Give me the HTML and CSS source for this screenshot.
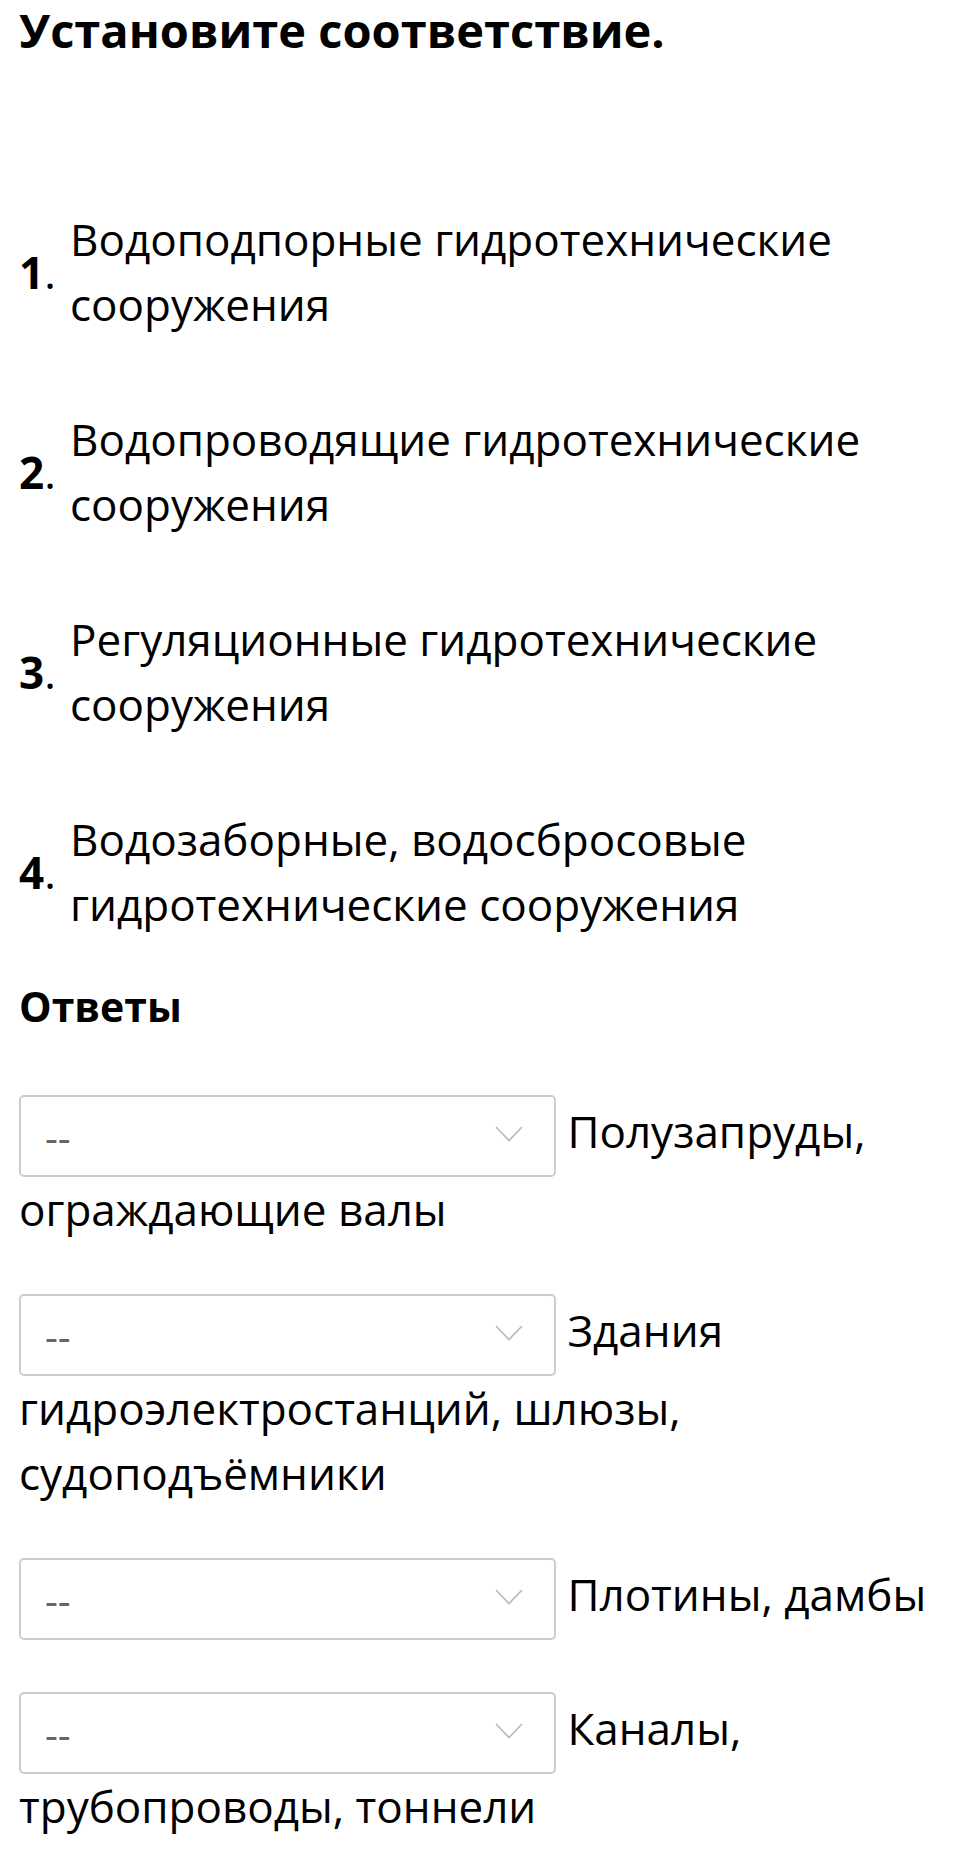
FILE: index.html
```html
<!DOCTYPE html>
<html lang="ru">
<head>
<meta charset="utf-8">
<title>Установите соответствие.</title>
<link rel="stylesheet" href="styles.css">
</head>
<body>
<div class="page">
  <h1 class="title">Установите соответствие.</h1>

  <ol class="items">
    <li class="item"><span class="num"><b>1</b>.</span><span class="text">Водоподпорные гидротехнические сооружения</span></li>
    <li class="item"><span class="num"><b>2</b>.</span><span class="text">Водопроводящие гидротехнические сооружения</span></li>
    <li class="item"><span class="num"><b>3</b>.</span><span class="text">Регуляционные гидротехнические сооружения</span></li>
    <li class="item"><span class="num"><b>4</b>.</span><span class="text">Водозаборные, водосбросовые гидротехнические сооружения</span></li>
  </ol>

  <h2 class="answers-title">Ответы</h2>

  <div class="answers">
    <div class="answer">
      <span class="select-wrap"><select class="select"><option>--</option><option>1</option><option>2</option><option>3</option><option>4</option></select><svg class="chevron" viewBox="0 0 28 16" width="28" height="16"><path d="M1 1 L14 14.5 L27 1" fill="none" stroke="#b9b9b9" stroke-width="1.6"/></svg></span>
      Полузапруды, ограждающие валы
    </div>
    <div class="answer">
      <span class="select-wrap"><select class="select"><option>--</option><option>1</option><option>2</option><option>3</option><option>4</option></select><svg class="chevron" viewBox="0 0 28 16" width="28" height="16"><path d="M1 1 L14 14.5 L27 1" fill="none" stroke="#b9b9b9" stroke-width="1.6"/></svg></span>
      Здания гидроэлектростанций, шлюзы, судоподъёмники
    </div>
    <div class="answer">
      <span class="select-wrap"><select class="select"><option>--</option><option>1</option><option>2</option><option>3</option><option>4</option></select><svg class="chevron" viewBox="0 0 28 16" width="28" height="16"><path d="M1 1 L14 14.5 L27 1" fill="none" stroke="#b9b9b9" stroke-width="1.6"/></svg></span>
      Плотины, дамбы
    </div>
    <div class="answer">
      <span class="select-wrap"><select class="select"><option>--</option><option>1</option><option>2</option><option>3</option><option>4</option></select><svg class="chevron" viewBox="0 0 28 16" width="28" height="16"><path d="M1 1 L14 14.5 L27 1" fill="none" stroke="#b9b9b9" stroke-width="1.6"/></svg></span>
      Каналы, трубопроводы, тоннели
    </div>
  </div>
</div>
</body>
</html>
```

FILE: styles.css
```css
html, body {
  margin: 0;
  padding: 0;
  background: #fff;
}

body {
  font-family: "Open Sans", "Noto Sans", sans-serif;
  color: #000;
}

.page {
  padding: 0 19px;
}

.title {
  margin: 0;
  font-size: 47px;
  font-weight: 700;
  line-height: 60px;
}

.items {
  list-style: none;
  margin: 147px 0 0;
  padding: 0;
}

.item {
  display: flex;
  align-items: center;
  margin-bottom: 70px;
}

.item:last-child {
  margin-bottom: 0;
}

.num {
  flex: 0 0 51px;
  font-size: 44px;
  line-height: 65px;
}

.num b {
  font-weight: 700;
}

.text {
  font-size: 44px;
  line-height: 65px;
}

.answers-title {
  margin: 37px 0 56px;
  font-size: 41px;
  font-weight: 700;
  line-height: 65px;
}

.answer {
  font-size: 44px;
  line-height: 65px;
  margin-bottom: 52px;
}

.select-wrap {
  position: relative;
  display: inline-block;
  vertical-align: middle;
}

.select {
  display: block;
  -webkit-appearance: none;
  appearance: none;
  width: 537px;
  height: 82px;
  margin: 0;
  padding: 0 20px 0 24px;
  border: 2px solid #cdcdcd;
  border-radius: 5px;
  background: #fff;
  font-family: "Open Sans", "Noto Sans", sans-serif;
  font-size: 40px;
  color: #666;
}

.chevron {
  position: absolute;
  right: 33px;
  top: 31px;
}
```
